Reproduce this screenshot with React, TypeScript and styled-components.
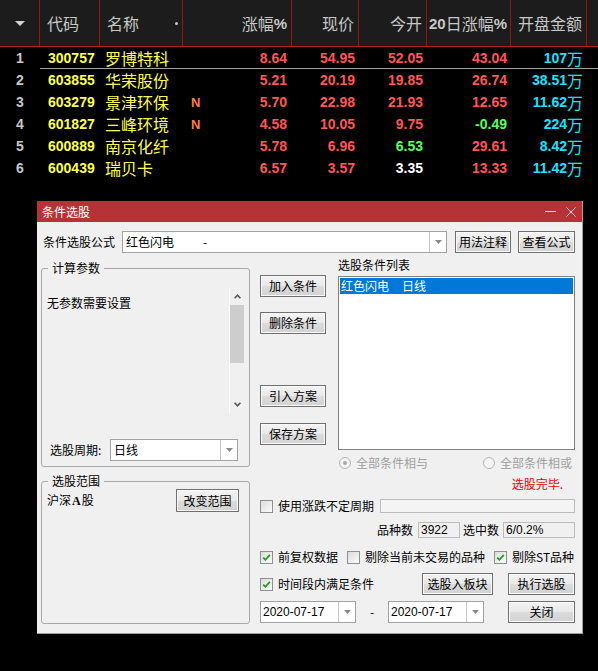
import React from "react";
import styled, { createGlobalStyle } from "styled-components";

const GlobalStyle = createGlobalStyle`
  html, body { margin: 0; padding: 0; background: #000; }
  * { box-sizing: border-box; }
`;

const CJK = `"Noto Sans CJK SC", "Liberation Sans", sans-serif`;
const NUM = `"Liberation Sans", "Noto Sans CJK SC", sans-serif`;
const COLS = "40px 60px 83px 109px 67px 68px 84px 76px 1fr";

const RED = "#ff5757";
const GREEN = "#5cff5c";
const WHITE = "#ffffff";
const CYAN = "#1ee2ff";

const Page = styled.div`
  width: 598px;
  height: 671px;
  background: #000;
  overflow: hidden;
`;

/* ---------- quote table ---------- */

const HeaderRow = styled.div`
  display: grid;
  grid-template-columns: ${COLS};
  height: 47px;
  background: #1c1c1c;
  border-bottom: 1px solid #c41a1a;
`;

const HeadCell = styled.div<{ $align?: "left" | "right" | "center"; $last?: boolean }>`
  display: flex;
  align-items: center;
  justify-content: ${(p) =>
    p.$align === "right" ? "flex-end" : p.$align === "center" ? "center" : "space-between"};
  padding: 0 4px 0 7px;
  border-right: ${(p) => (p.$last ? "none" : "1px solid #a01212")};
  color: #c8c8c8;
  font: 16px/1 ${CJK};
  white-space: nowrap;
`;

const HeadBold = styled.span`
  font: bold 15px/1 ${NUM};
`;

const Dot = styled.span`
  width: 3px;
  height: 3px;
  border-radius: 50%;
  background: #c8c8c8;
`;

const Row = styled.div`
  display: grid;
  grid-template-columns: ${COLS};
  height: 22px;
`;

const Cell = styled.div<{
  $align?: "left" | "right" | "center" | "between";
  $color?: string;
  $cursor?: boolean;
}>`
  display: flex;
  align-items: center;
  justify-content: ${(p) =>
    p.$align === "right"
      ? "flex-end"
      : p.$align === "center"
      ? "center"
      : p.$align === "between"
      ? "space-between"
      : "flex-start"};
  padding: 0 4px 0 8px;
  color: ${(p) => p.$color ?? RED};
  font: bold 14px/1 ${NUM};
  white-space: nowrap;
  box-shadow: ${(p) => (p.$cursor ? "inset 0 -1px 0 #a4a4a4" : "none")};
`;

const NameCell = styled(Cell)`
  padding-left: 5px;
  font: 16px/1 ${CJK};
`;

const Flag = styled.span`
  color: #ff7d3c;
  font: bold 13px/1 ${NUM};
`;

const Unit = styled.span`
  font: 16px/1 ${CJK};
`;

type Quote = {
  code: string;
  name: string;
  n?: boolean;
  chg: string;
  price: string;
  open: string;
  openColor?: string;
  d20: string;
  d20Color?: string;
  amt: string;
};

const quotes: Quote[] = [
  { code: "300757", name: "罗博特科", chg: "8.64", price: "54.95", open: "52.05", d20: "43.04", amt: "107" },
  { code: "603855", name: "华荣股份", chg: "5.21", price: "20.19", open: "19.85", d20: "26.74", amt: "38.51" },
  { code: "603279", name: "景津环保", n: true, chg: "5.70", price: "22.98", open: "21.93", d20: "12.65", amt: "11.62" },
  { code: "601827", name: "三峰环境", n: true, chg: "4.58", price: "10.05", open: "9.75", d20: "-0.49", d20Color: GREEN, amt: "224" },
  { code: "600889", name: "南京化纤", chg: "5.78", price: "6.96", open: "6.53", openColor: GREEN, d20: "29.61", amt: "8.42" },
  { code: "600439", name: "瑞贝卡", chg: "6.57", price: "3.57", open: "3.35", openColor: WHITE, d20: "13.33", amt: "11.42" },
];

/* ---------- dialog ---------- */

const Dialog = styled.div`
  margin: 22px 0 0 37px;
  width: 546px;
  background: #f0f0f0;
  border-right: 1px solid #a0a0a0;
  border-bottom: 1px solid #a0a0a0;
  font: 12px/16px ${CJK};
  color: #000;
`;

const TitleBar = styled.div`
  display: flex;
  align-items: center;
  height: 21px;
  padding: 0 6px 0 5px;
  background: #b63236;
  color: #fff;
`;

const Title = styled.span`
  flex: 1;
`;

const WinButtons = styled.div`
  display: flex;
  align-items: center;
  gap: 10px;
`;

const Body = styled.div`
  padding: 9px 7px 9px 4px;
`;

const TopRow = styled.div`
  display: flex;
  align-items: center;
  height: 22px;
`;

const Label = styled.span<{ $w?: number; $ml?: number }>`
  display: inline-block;
  width: ${(p) => (p.$w ? `${p.$w}px` : "auto")};
  margin-left: ${(p) => p.$ml ?? 0}px;
  white-space: nowrap;
`;

const Combo = styled.div<{ $w: number }>`
  display: flex;
  width: ${(p) => p.$w}px;
  height: 22px;
  border: 1px solid #a2a2a2;
  background: #fff;
  flex-shrink: 0;
`;

const ComboText = styled.div<{ $mono?: boolean }>`
  flex: 1;
  display: flex;
  align-items: center;
  padding-left: ${(p) => (p.$mono ? 2 : 3)}px;
  font: ${(p) => (p.$mono ? `12px/1 ${NUM}` : `12px/16px ${CJK}`)};
  white-space: nowrap;
`;

const ComboArrow = styled.div`
  width: 17px;
  display: flex;
  align-items: center;
  justify-content: center;
  border-left: 1px solid #c4c4c4;
`;

const Dash = styled.span`
  margin-left: 29px;
`;

const Button = styled.button<{ $w: number; $ml?: number }>`
  width: ${(p) => p.$w}px;
  height: 22px;
  margin: 0 0 0 ${(p) => p.$ml ?? 0}px;
  padding: 0;
  flex-shrink: 0;
  border: 1px solid #707070;
  box-shadow: inset 0 0 0 1px #fafafa;
  background: linear-gradient(#f4f4f4, #e8e8e8 50%, #dcdcdc 51%, #d2d2d2);
  font: 12px/16px ${CJK};
  color: #000;
`;

const Main = styled.div`
  display: grid;
  grid-template-columns: 209px 315px;
  column-gap: 10px;
`;

const LeftCol = styled.div`
  display: flex;
  flex-direction: column;
`;

const Group = styled.fieldset<{ $mt: number; $h?: number }>`
  margin: ${(p) => p.$mt}px 0 0;
  padding: 0 5px 5px;
  min-width: 0;
  height: ${(p) => (p.$h ? `${p.$h}px` : "auto")};
  border: 1px solid #a9a9a9;
  border-radius: 3px;
`;

const Legend = styled.legend`
  margin-left: 1px;
  padding: 0 4px;
  font: 12px/14px ${CJK};
`;

const ParamArea = styled.div`
  display: flex;
  height: 125px;
  margin-top: 13px;
`;

const ParamText = styled.div`
  flex: 1;
  padding-top: 7px;
`;

const ScrollBar = styled.div`
  width: 15px;
  display: flex;
  flex-direction: column;
  border-left: 1px solid #fff;
  background: #f0f0f0;
`;

const ScrollArrow = styled.div`
  height: 17px;
  display: flex;
  align-items: center;
  justify-content: center;
`;

const ScrollThumb = styled.div`
  height: 58px;
  background: #cdcdcd;
`;

const ScrollTrack = styled.div`
  flex: 1;
`;

const PeriodRow = styled.div`
  display: flex;
  align-items: center;
  margin-top: 26px;
  height: 22px;
`;

const ScopeRow = styled.div`
  display: flex;
  align-items: center;
  justify-content: space-between;
  height: 23px;
  margin-top: 1px;
`;

const SerifA = styled.b`
  font: bold 12px/16px "Liberation Serif", serif;
  margin: 0 1px;
`;

const RightCol = styled.div`
  display: flex;
  flex-direction: column;
`;

const Upper = styled.div`
  display: grid;
  grid-template-columns: 66px 237px;
  column-gap: 12px;
`;

const ButtonCol = styled.div`
  display: flex;
  flex-direction: column;
`;

const StackButton = styled(Button)`
  display: block;
`;

const ListCol = styled.div`
  display: flex;
  flex-direction: column;
  padding-top: 4px;
`;

const ListBox = styled.div`
  height: 174px;
  margin-top: 3px;
  border: 1px solid #828282;
  background: #fff;
  padding: 1px;
`;

const ListItem = styled.div`
  height: 16px;
  padding-left: 1px;
  background: #0078d7;
  color: #fff;
`;

const ItemGap = styled.span`
  margin-left: 13px;
`;

const RadioRow = styled.div`
  display: grid;
  grid-template-columns: 144px 1fr;
  height: 16px;
  margin-top: 5px;
  padding-left: 79px;
  color: #a0a0a0;
`;

const RadioItem = styled.label`
  display: flex;
  align-items: center;
  gap: 5px;
`;

const RadioCircle = styled.span`
  width: 12px;
  height: 12px;
  border-radius: 50%;
  border: 1px solid #b4b4b4;
  background: #f4f4f4;
  display: flex;
  align-items: center;
  justify-content: center;
`;

const RadioDot = styled.span`
  width: 4px;
  height: 4px;
  border-radius: 50%;
  background: #a8a8a8;
`;

const StatusRow = styled.div`
  display: flex;
  justify-content: flex-end;
  height: 16px;
  margin-top: 5px;
  padding-right: 12px;
  color: #ee0000;
`;

const FlexRow = styled.div<{ $mt: number; $h: number }>`
  display: flex;
  align-items: center;
  height: ${(p) => p.$h}px;
  margin-top: ${(p) => p.$mt}px;
`;

const Check = styled.label<{ $w?: number }>`
  display: flex;
  align-items: center;
  gap: 5px;
  width: ${(p) => (p.$w ? `${p.$w}px` : "auto")};
  white-space: nowrap;
  flex-shrink: 0;
`;

const CheckBox = styled.span`
  width: 13px;
  height: 13px;
  border: 1px solid #8e8f8f;
  background: linear-gradient(135deg, #dcdcdc, #fbfbfb);
  display: flex;
  align-items: center;
  justify-content: center;
`;

const Progress = styled.div`
  width: 195px;
  height: 14px;
  margin-left: auto;
  border: 1px solid #bcbcbc;
  background: #f4f4f4;
`;

const CountRow = styled.div`
  display: flex;
  justify-content: flex-end;
  align-items: center;
  height: 16px;
  margin-top: 9px;
`;

const CountBox = styled.div<{ $w: number; $ml: number; $mr?: number }>`
  width: ${(p) => p.$w}px;
  height: 16px;
  margin: 0 ${(p) => p.$mr ?? 0}px 0 ${(p) => p.$ml}px;
  padding-left: 2px;
  border: 1px solid #bdbdbd;
  background: #f0f0f0;
  font: 12px/14px ${NUM};
`;

const Spacer = styled.div`
  flex: 1;
`;

const DateDash = styled.span`
  width: 32px;
  text-align: center;
`;

/* ---------- icons ---------- */

const Caret = () => (
  <svg width="10" height="5" viewBox="0 0 10 5">
    <path d="M0 0 H10 L5 5 Z" fill="#d4d4d4" />
  </svg>
);

const DropTri = () => (
  <svg width="7" height="4" viewBox="0 0 7 4">
    <path d="M0 0 H7 L3.5 4 Z" fill="#8a8a8a" />
  </svg>
);

const Chevron = ({ up }: { up?: boolean }) => (
  <svg width="7" height="5" viewBox="0 0 7 5">
    <path
      d={up ? "M0.6 4.2 L3.5 1.2 L6.4 4.2" : "M0.6 0.8 L3.5 3.8 L6.4 0.8"}
      fill="none"
      stroke="#555"
      strokeWidth="1.5"
    />
  </svg>
);

const Tick = () => (
  <svg width="9" height="9" viewBox="0 0 9 9">
    <path d="M1.2 4.6 L3.4 6.8 L7.8 1.8" fill="none" stroke="#1f9f1f" strokeWidth="1.8" />
  </svg>
);

const MinIcon = () => (
  <svg width="11" height="2" viewBox="0 0 11 2">
    <rect x="0" y="0" width="11" height="1" fill="#f2d6d6" />
  </svg>
);

const CloseIcon = () => (
  <svg width="10" height="10" viewBox="0 0 10 10">
    <path d="M0.5 0.5 L9.5 9.5 M9.5 0.5 L0.5 9.5" stroke="#f2d6d6" strokeWidth="1" />
  </svg>
);

const CheckItem = ({ label, checked, w }: { label: string; checked?: boolean; w?: number }) => (
  <Check $w={w}>
    <CheckBox>{checked && <Tick />}</CheckBox>
    {label}
  </Check>
);

const App = () => {
  return (
    <>
      <GlobalStyle />
      <Page>
        <HeaderRow>
          <HeadCell $align="center" style={{ padding: 0 }}>
            <Caret />
          </HeadCell>
          <HeadCell>代码</HeadCell>
          <HeadCell>
            名称
            <Dot />
          </HeadCell>
          <HeadCell $align="right">
            涨幅<HeadBold>%</HeadBold>
          </HeadCell>
          <HeadCell $align="right">现价</HeadCell>
          <HeadCell $align="right">今开</HeadCell>
          <HeadCell $align="right" style={{ paddingRight: 3 }}>
            <HeadBold>20</HeadBold>日涨幅<HeadBold>%</HeadBold>
          </HeadCell>
          <HeadCell $align="right">开盘金额</HeadCell>
          <HeadCell $last />
        </HeaderRow>

        {quotes.map((q, i) => {
          const cur = i === 0;
          return (
            <Row key={q.code}>
              <Cell $align="center" $color="#c8c8c8" style={{ padding: 0 }}>
                {i + 1}
              </Cell>
              <Cell $color="#ffff50" $cursor={cur}>
                {q.code}
              </Cell>
              <NameCell $color="#ffff50" $cursor={cur}>
                {q.name}
              </NameCell>
              <Cell $align={q.n ? "between" : "right"} $cursor={cur} style={{ paddingRight: 5 }}>
                {q.n && <Flag>N</Flag>}
                {q.chg}
              </Cell>
              <Cell $align="right" $cursor={cur}>
                {q.price}
              </Cell>
              <Cell $align="right" $color={q.openColor} $cursor={cur}>
                {q.open}
              </Cell>
              <Cell $align="right" $color={q.d20Color} $cursor={cur}>
                {q.d20}
              </Cell>
              <Cell $align="right" $color={CYAN} $cursor={cur}>
                {q.amt}
                <Unit>万</Unit>
              </Cell>
              <Cell $cursor={cur} />
            </Row>
          );
        })}

        <Dialog>
          <TitleBar>
            <Title>条件选股</Title>
            <WinButtons>
              <MinIcon />
              <CloseIcon />
            </WinButtons>
          </TitleBar>
          <Body>
            <TopRow>
              <Label $w={79} $ml={2}>
                条件选股公式
              </Label>
              <Combo $w={325}>
                <ComboText>
                  红色闪电<Dash>-</Dash>
                </ComboText>
                <ComboArrow>
                  <DropTri />
                </ComboArrow>
              </Combo>
              <Button $w={56} $ml={8}>
                用法注释
              </Button>
              <Button $w={57} $ml={7}>
                查看公式
              </Button>
            </TopRow>

            <Main>
              <LeftCol>
                <Group $mt={8}>
                  <Legend>计算参数</Legend>
                  <ParamArea>
                    <ParamText>无参数需要设置</ParamText>
                    <ScrollBar>
                      <ScrollArrow>
                        <Chevron up />
                      </ScrollArrow>
                      <ScrollThumb />
                      <ScrollTrack />
                      <ScrollArrow>
                        <Chevron />
                      </ScrollArrow>
                    </ScrollBar>
                  </ParamArea>
                  <PeriodRow>
                    <Label $w={60} $ml={3}>
                      选股周期:
                    </Label>
                    <Combo $w={128}>
                      <ComboText>日线</ComboText>
                      <ComboArrow>
                        <DropTri />
                      </ComboArrow>
                    </Combo>
                  </PeriodRow>
                </Group>
                <Group $mt={7} $h={150}>
                  <Legend>选股范围</Legend>
                  <ScopeRow>
                    <span>
                      沪深<SerifA>A</SerifA>股
                    </span>
                    <Button $w={63} style={{ marginRight: 5, height: 23 }}>
                      改变范围
                    </Button>
                  </ScopeRow>
                </Group>
              </LeftCol>

              <RightCol>
                <Upper>
                  <ButtonCol>
                    <StackButton $w={66} style={{ marginTop: 22 }}>
                      加入条件
                    </StackButton>
                    <StackButton $w={66} style={{ marginTop: 15 }}>
                      删除条件
                    </StackButton>
                    <StackButton $w={66} style={{ marginTop: 51 }}>
                      引入方案
                    </StackButton>
                    <StackButton $w={66} style={{ marginTop: 16 }}>
                      保存方案
                    </StackButton>
                  </ButtonCol>
                  <ListCol>
                    <Label>选股条件列表</Label>
                    <ListBox>
                      <ListItem>
                        红色闪电<ItemGap>日线</ItemGap>
                      </ListItem>
                    </ListBox>
                  </ListCol>
                </Upper>

                <RadioRow>
                  <RadioItem>
                    <RadioCircle>
                      <RadioDot />
                    </RadioCircle>
                    全部条件相与
                  </RadioItem>
                  <RadioItem>
                    <RadioCircle />
                    全部条件相或
                  </RadioItem>
                </RadioRow>

                <StatusRow>选股完毕.</StatusRow>

                <FlexRow $mt={7} $h={14}>
                  <CheckItem label="使用涨跌不定周期" />
                  <Progress />
                </FlexRow>

                <CountRow>
                  <Label>品种数</Label>
                  <CountBox $w={42} $ml={5} $mr={3}>
                    3922
                  </CountBox>
                  <Label>选中数</Label>
                  <CountBox $w={72} $ml={4}>
                    6/0.2%
                  </CountBox>
                </CountRow>

                <FlexRow $mt={11} $h={16}>
                  <CheckItem label="前复权数据" checked w={87} />
                  <CheckItem label="剔除当前未交易的品种" w={147} />
                  <CheckItem label="剔除ST品种" checked />
                </FlexRow>

                <FlexRow $mt={8} $h={22}>
                  <CheckItem label="时间段内满足条件" checked />
                  <Spacer />
                  <Button $w={71}>选股入板块</Button>
                  <Button $w={67} $ml={15}>
                    执行选股
                  </Button>
                </FlexRow>

                <FlexRow $mt={6} $h={22}>
                  <Combo $w={96}>
                    <ComboText $mono>2020-07-17</ComboText>
                    <ComboArrow>
                      <DropTri />
                    </ComboArrow>
                  </Combo>
                  <DateDash>-</DateDash>
                  <Combo $w={96}>
                    <ComboText $mono>2020-07-17</ComboText>
                    <ComboArrow>
                      <DropTri />
                    </ComboArrow>
                  </Combo>
                  <Spacer />
                  <Button $w={67}>关闭</Button>
                </FlexRow>
              </RightCol>
            </Main>
          </Body>
        </Dialog>
      </Page>
    </>
  );
};

export default App;
